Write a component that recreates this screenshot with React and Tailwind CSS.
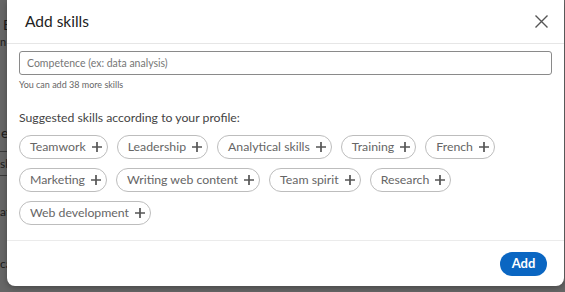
import React from "react";

const font = { fontFamily: '"Segoe UI", Lato, "Open Sans", sans-serif' };

function Plus() {
  return (
    <svg width="10" height="10" viewBox="0 0 10 10" className="shrink-0">
      <path d="M5 0v10M0 5h10" stroke="#555" strokeWidth="1.7" fill="none" />
    </svg>
  );
}

function Chip({ label }) {
  return (
    <div className="h-[24px] flex items-center gap-[6px] pl-[10px] pr-[5px] rounded-full border border-[#bdbdbd] text-[12.3px] text-[#666] leading-none whitespace-nowrap">
      <span>{label}</span>
      <Plus />
    </div>
  );
}

export default function App() {
  const rows = [
    ["Teamwork", "Leadership", "Analytical skills", "Training", "French"],
    ["Marketing", "Writing web content", "Team spirit", "Research"],
    ["Web development"],
  ];
  return (
    <div className="relative w-[565px] h-[292px] overflow-hidden bg-[#666666]" style={font}>
      <div className="absolute left-[3px] top-[18px] text-[14px] text-[#1c1c1c] leading-none">E</div>
      <div className="absolute left-[0px] top-[36px] text-[11px] text-[#1c1c1c] leading-none">n</div>
      <div className="absolute left-[1px] top-[126px] text-[14px] text-[#1c1c1c] leading-none">e</div>
      <div className="absolute left-[0px] top-[151px] w-[7px] h-[25px] border-y border-[#3a3a3a] text-[12px] text-[#1c1c1c] leading-[23px]">sl</div>
      <div className="absolute left-[0px] top-[206px] text-[12px] text-[#1c1c1c] leading-none">at</div>
      <div className="absolute left-[0px] top-[258px] text-[12px] text-[#1c1c1c] leading-none">ca</div>

      <div className="absolute left-[7px] top-0 w-[557px] h-[286px] bg-white rounded-b-[8px] flex flex-col shadow-[0_2px_6px_rgba(0,0,0,0.3)]">
        <div className="h-[44px] shrink-0 flex items-center justify-between pl-[18px] pr-[16px] border-b border-[#e6e6e6]">
          <span className="text-[15.5px] text-[#222] leading-none">Add skills</span>
          <svg width="13" height="13" viewBox="0 0 13 13">
            <path d="M0.5 0.5l12 12M12.5 0.5l-12 12" stroke="#555" strokeWidth="1.4" fill="none" />
          </svg>
        </div>
        <div className="flex-1 px-[12px] pt-[7px]">
          <div className="h-[24px] rounded-[3px] border border-[#8a8a8a] flex items-center pl-[7px] text-[10.5px] text-[#767676] leading-none">
            Competence (ex: data analysis)
          </div>
          <div className="mt-[5px] text-[9px] text-[#666] leading-none">You can add 38 more skills</div>
          <div className="mt-[23px] text-[12.25px] text-[#444] leading-none">Suggested skills according to your profile:</div>
          <div className="mt-[11px] flex flex-col gap-[9px]">
            {rows.map((r, i) => (
              <div key={i} className="flex gap-[9px]">
                {r.map((l) => (
                  <Chip key={l} label={l} />
                ))}
              </div>
            ))}
          </div>
        </div>
        <div className="h-[46px] shrink-0 border-t border-[#ebebeb] flex items-center justify-end pr-[17px]">
          <div className="h-[24px] w-[47px] rounded-full bg-[#0a66c2] flex items-center justify-center text-white text-[13px] font-bold leading-none">
            Add
          </div>
        </div>
      </div>
    </div>
  );
}
